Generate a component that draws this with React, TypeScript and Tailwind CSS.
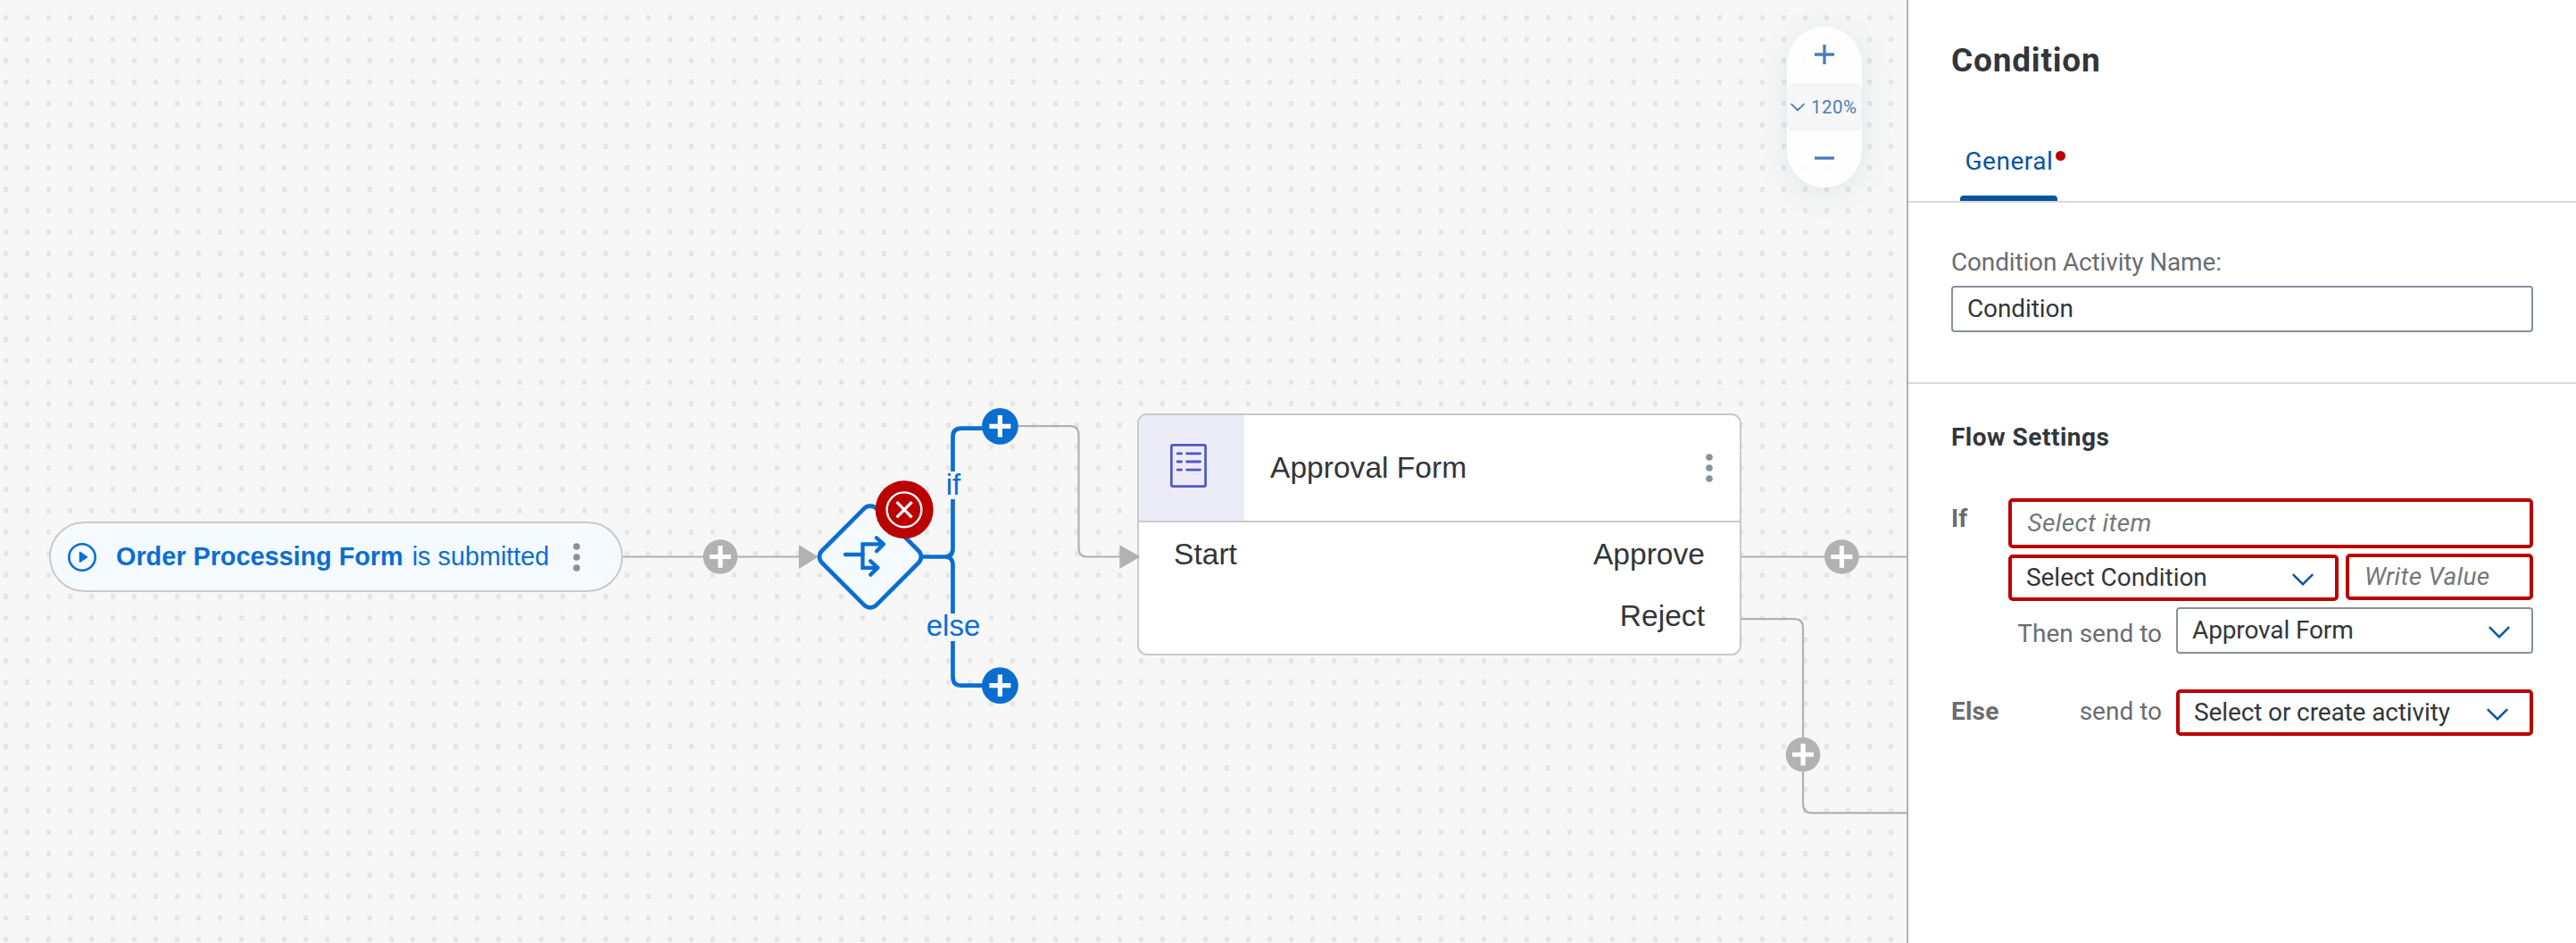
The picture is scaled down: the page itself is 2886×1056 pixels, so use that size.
import React from 'react';

function AddButton({ x, y, blue = false }: { x: number; y: number; blue?: boolean }) {
  return (
    <g>
      <circle cx={x} cy={y} r={blue ? 20.4 : 19.3} className={blue ? 'fill-[#0a6ed1]' : 'fill-[#b2b2b2]'} />
      <path d={`M${x - 12} ${y}H${x + 12}M${x} ${y - 12.2}V${y + 12.2}`} className="stroke-white" strokeWidth={5.2} />
    </g>
  );
}

function Edges() {
  return (
    <svg className="absolute inset-0" width="2136" height="1056" fill="none">
      <defs>
        <pattern id="dots" width="24" height="24" patternUnits="userSpaceOnUse">
          <rect x="4.1" y="17.3" width="4.8" height="5.5" rx="0.6" fill="#e5e5e5" />
        </pattern>
      </defs>
      <rect width="2136" height="1056" fill="url(#dots)" />

      <g stroke="#b2b2b2" strokeWidth={2.2}>
        <path d="M698 623.5H900" />
        <path d="M1138 477.2H1199Q1208.5 477.2 1208.5 487V614Q1208.5 623.5 1218 623.5H1258" />
        <path d="M1950 623.5H2136" />
        <path d="M1950 693.2H2010Q2020 693.2 2020 703V900.5Q2020 910.3 2030 910.3H2136" />
      </g>
      <path d="M895 610.3L917 623.5L895 637Z" fill="#b2b2b2" />

      <g stroke="#0a6ed1" strokeWidth={4.7}>
        <path d="M1030 623.5H1059Q1067.5 623.5 1067.5 614V489Q1067.5 479.6 1077 479.6H1110" />
        <path d="M1059 623.5Q1067.5 623.5 1067.5 633V758Q1067.5 767.7 1077 767.7H1110" />
      </g>

      <AddButton x={807} y={623.5} />
      <AddButton x={2063.4} y={623.5} />
      <AddButton x={2020} y={845} />
      <AddButton x={1120.4} y={477.3} blue />
      <AddButton x={1120.4} y={767.7} blue />
    </svg>
  );
}

function ConditionNode() {
  return (
    <svg className="absolute left-[910px] top-[530px]" width="145" height="160" viewBox="910 530 145 160" fill="none">
      <rect x="932" y="580.5" width="86" height="86" rx="9.5" transform="rotate(45 975 623.5)" fill="#f5faff" stroke="#0a6ed1" strokeWidth="4.7" />
      <g stroke="#0a6ed1" strokeWidth="4.3" strokeLinecap="round">
        <path d="M947 621H966.5" />
        <path d="M989 609.3H966.5V635.8H983" strokeLinecap="butt" />
        <path d="M982 602.3L990 609.3L982 617.3" strokeLinejoin="round" />
        <path d="M975.2 628.3L983.5 635.8L975.2 643.6" strokeLinejoin="round" />
      </g>
      <circle cx="1013.2" cy="570.8" r="32.5" fill="#bb0000" />
      <circle cx="1013" cy="570.8" r="19.4" stroke="#fff" strokeWidth="2.4" />
      <path d="M1004.6 562.2L1021.6 579.4M1021.6 562.2L1004.6 579.4" stroke="#fff" strokeWidth="3.3" />
    </svg>
  );
}

function MoreDots() {
  return (
    <svg width="8" height="34" viewBox="0 0 8 34" className="fill-[#89919a] shrink-0">
      <circle cx="4" cy="5" r="3.8" />
      <circle cx="4" cy="17" r="3.8" />
      <circle cx="4" cy="29" r="3.8" />
    </svg>
  );
}

function TriggerNode() {
  return (
    <div className="absolute left-[55px] top-[584px] w-[643px] h-[79px] rounded-full border-[2.4px] border-[#c9c9c9] bg-[#f5faff] flex items-center pl-[19px] text-[28.8px] text-[#0a6ed1]">
      <svg width="32" height="32" viewBox="0 0 32 32" fill="none" className="shrink-0">
        <circle cx="16" cy="16" r="14.7" stroke="#0a6ed1" strokeWidth="2.6" />
        <path d="M13.5 10.5L21.5 15.8L13.5 21.2Z" fill="#0a6ed1" stroke="#0a6ed1" strokeWidth="1.5" strokeLinejoin="round" />
      </svg>
      <span className="ml-[22px] whitespace-pre">
        <b>Order Processing Form</b> <span className="ml-[2px]">is submitted</span>
      </span>
      <span className="ml-auto mr-[45.6px]">
        <MoreDots />
      </span>
    </div>
  );
}

function FormNode() {
  return (
    <div className="absolute left-[1274px] top-[463px] w-[677px] h-[271px] rounded-[11px] border-2 border-[#c9c9c9] bg-white overflow-hidden text-[33.6px] leading-[40px] text-[#32363a]">
      <div className="flex h-[120px] border-b-2 border-[#c9c9c9]">
        <div className="w-[118px] bg-[#ececf9] flex">
          <svg width="41" height="49" viewBox="0 0 41 49" fill="none" stroke="#5058c0" className="ml-[34.6px] mt-[32px]">
            <rect x="1.4" y="1.4" width="38.2" height="46.2" rx="1.6" strokeWidth="2.7" />
            <path d="M8.2 10.9H12.6M18.6 10.9H33.6M8.2 20H12.6M18.6 20H33.6M8.2 29.1H12.6M18.6 29.1H33.6" strokeWidth="2.8" strokeLinecap="round" />
          </svg>
        </div>
        <div className="flex-1 flex items-center justify-between pl-[29px] pr-[30px]">
          <span>Approval Form</span>
          <MoreDots />
        </div>
      </div>
      <div className="flex justify-between px-[39px] pt-4">
        <div>Start</div>
        <div className="flex flex-col items-end gap-[29px]">
          <div>Approve</div>
          <div>Reject</div>
        </div>
      </div>
    </div>
  );
}

function ZoomControl() {
  return (
    <div className="absolute left-[2002px] top-[30px] w-[84px] h-[180px] rounded-full bg-white/90 shadow-[0_6px_36px_rgba(60,90,120,0.11)] flex flex-col items-center text-[#4a7db8] font-['Roboto',sans-serif]">
      <div className="h-16 flex items-center">
        <svg width="22" height="22" stroke="currentColor" strokeWidth="3.3" className="mt-[-2px]">
          <path d="M0 11H22M11 0V22" />
        </svg>
      </div>
      <div className="w-full h-[52px] rounded-[8px] border-y-2 border-[#f0f0f0] bg-[#f7f7f7]/95 flex items-center pl-1 gap-[7px] text-[20.5px]">
        <svg width="16" height="10" fill="none" stroke="currentColor" strokeWidth="1.8">
          <path d="M0.6 1.2L8 8.4L15.4 1.2" />
        </svg>
        <span className="tracking-[0.5px]">120%</span>
      </div>
      <div className="flex-1 flex items-center pb-[2px]">
        <svg width="22" height="4" className="fill-current">
          <rect y="0.4" width="22" height="3.3" />
        </svg>
      </div>
    </div>
  );
}

function Canvas() {
  return (
    <main className="relative w-[2136px] h-full bg-[#f7f7f7] overflow-hidden shrink-0 font-['Liberation_Sans',Arial,sans-serif]">
      <Edges />
      <div className="absolute left-[1058px] top-[528px] w-5 h-[31px] bg-[#f7f7f7] flex justify-center text-[33px] leading-[29px] text-[#0a6ed1]">if</div>
      <div className="absolute left-[1037px] top-[687px] w-[62px] h-[31px] bg-[#f7f7f7] flex justify-center text-[33px] leading-[28px] text-[#0a6ed1]">else</div>
      <ConditionNode />
      <TriggerNode />
      <FormNode />
      <svg className="absolute left-[1254px] top-[610px]" width="24" height="27" fill="#b2b2b2">
        <path d="M0.3 0.3L23.5 13.5L0.3 26.9Z" />
      </svg>
      <ZoomControl />
    </main>
  );
}

function Chevron() {
  return (
    <svg width="24" height="14" viewBox="0 0 24 14" fill="none" stroke="#0854a0" strokeWidth="2.4" className="ml-auto mr-6 mt-[3px]">
      <path d="M0.8 1.2L12 12.2L23.2 1.2" />
    </svg>
  );
}

function Panel() {
  return (
    <aside className="flex-1 h-full bg-white border-l-2 border-[#b0b0b0] text-[28px] leading-[32px] text-[#32363a] font-['Roboto',sans-serif]">
      <header className="h-[227px] border-b-2 border-[#d9d9d9] pt-[46px] flex flex-col">
        <h1 className="pl-12 text-[37px] leading-[44px] font-bold tracking-[0.8px]">Condition</h1>
        <div className="mt-auto ml-[58px] w-[109px] flex flex-col">
          <div className="relative pl-[5.5px] leading-[40px] tracking-[0.5px] text-[#0854a0]">
            General
            <span className="absolute left-[106.5px] top-[7.5px] size-[11px] rounded-full bg-[#bb0000]" />
          </div>
          <div className="mt-[18px] h-[6px] rounded-t-[4px] bg-[#0854a0]" />
        </div>
      </header>

      <section className="pt-[51px] pb-[56px] pl-12 pr-12 border-b-2 border-[#d9d9d9]">
        <div className="text-[#6a6d70] tracking-[-0.16px]">Condition Activity Name:</div>
        <div className="mt-[10px] h-[52px] border-[2px] border-[#89919a] rounded-[4px] flex items-center pl-4 tracking-[-0.1px]">Condition</div>
      </section>

      <section className="pt-[44px] pl-12 pr-12 text-[#32363a]">
        <h2 className="font-bold tracking-[0.5px]">Flow Settings</h2>
        <div className="mt-[52px] flex">
          <div className="w-16 pt-[7px] font-bold text-[#6a6d70] shrink-0">If</div>
          <div className="flex-1 flex flex-col">
            <div className="h-[56px] border-[4px] border-[#bb0000] rounded-[5px] pl-[17.5px] leading-[47px] italic text-[#74777a] tracking-[0.35px]">Select item</div>
            <div className="mt-[6px] flex items-start gap-2">
              <div className="mt-px w-[370px] h-[52px] border-[4px] border-[#bb0000] rounded-[5px] pl-4 flex items-center tracking-[-0.05px]">
                Select Condition
                <Chevron />
              </div>
              <div className="flex-1 h-[52px] border-[4px] border-[#bb0000] rounded-[5px] pl-[17px] leading-[43px] italic text-[#74777a] tracking-[0.3px]">Write Value</div>
            </div>
            <div className="mt-[7px] flex">
              <div className="w-[172px] pt-[14px] text-right text-[#6a6d70]">Then send to</div>
              <div className="ml-4 flex-1 h-[52px] border-[2px] border-[#89919a] rounded-[4px] pl-[16px] flex items-center tracking-[-0.12px]">
                Approval Form
                <Chevron />
              </div>
            </div>
          </div>
        </div>
        <div className="mt-10 flex">
          <div className="w-16 pt-[9px] font-bold text-[#6a6d70] tracking-[0.2px]">Else</div>
          <div className="w-[172px] pt-[9px] text-right text-[#6a6d70]">send to</div>
          <div className="ml-4 flex-1 h-[52px] border-[4px] border-[#bb0000] rounded-[5px] pl-4 flex items-center tracking-[-0.12px]">
            Select or create activity
            <Chevron />
          </div>
        </div>
      </section>
    </aside>
  );
}

export default function App() {
  return (
    <div className="flex w-[2886px] h-[1056px] overflow-hidden">
      <Canvas />
      <Panel />
    </div>
  );
}
